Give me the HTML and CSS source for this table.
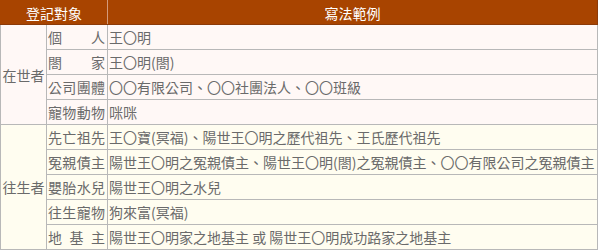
FILE: index.html
```html
<!DOCTYPE html>
<html lang="zh-Hant">
<head>
<meta charset="utf-8">
<title>登記對象</title>
<link rel="stylesheet" href="styles.css">
</head>
<body>
<table class="reg">
  <colgroup>
    <col class="c1">
    <col class="c2">
    <col class="c3">
  </colgroup>
  <thead>
    <tr><th colspan="2">登記對象</th><th>寫法範例</th></tr>
  </thead>
  <tbody class="alive">
    <tr><td rowspan="4" class="grp">在世者</td><td class="kind">個人</td><td>王〇明</td></tr>
    <tr><td class="kind">閤家</td><td>王〇明(閤)</td></tr>
    <tr><td class="kind">公司團體</td><td>〇〇有限公司、〇〇社團法人、〇〇班級</td></tr>
    <tr><td class="kind">寵物動物</td><td>咪咪</td></tr>
  </tbody>
  <tbody class="dead">
    <tr><td rowspan="5" class="grp">往生者</td><td class="kind">先亡祖先</td><td>王〇寶(冥福)、陽世王〇明之歷代祖先、王氏歷代祖先</td></tr>
    <tr><td class="kind">冤親債主</td><td>陽世王〇明之冤親債主、陽世王〇明(閤)之冤親債主、〇〇有限公司之冤親債主</td></tr>
    <tr><td class="kind">嬰胎水兒</td><td>陽世王〇明之水兒</td></tr>
    <tr><td class="kind">往生寵物</td><td>狗來富(冥福)</td></tr>
    <tr><td class="kind">地基主</td><td>陽世王〇明家之地基主 或 陽世王〇明成功路家之地基主</td></tr>
  </tbody>
</table>
</body>
</html>
```

FILE: styles.css
```css
html, body {
  margin: 0;
  padding: 0;
  background: #ffffff;
}

.reg {
  border-collapse: collapse;
  width: 598px;
  table-layout: fixed;
  font-family: "Noto Sans CJK TC", "Noto Sans", sans-serif;
  font-size: 14px;
  color: #6a6a6a;
  line-height: 18px;
  white-space: nowrap;
}

.c1 { width: 46px; }
.c2 { width: 61px; }

.reg th {
  background: #a84400;
  color: #ffffff;
  font-weight: normal;
  height: 23px;
  padding: 0;
  text-align: center;
  border: 1px solid #a84400;
  border-right-color: #d49a7a;
  border-bottom-color: #8c3a08;
}

.reg th:last-child {
  border-right-color: #8c3a08;
}

.reg td {
  height: 24px;
  padding: 0 0 0 1px;
  border: 1px solid #b8b8b8;
  text-align: left;
  vertical-align: middle;
}

.reg td.grp {
  text-align: center;
  padding: 0;
}

.reg td.kind {
  text-align: justify;
  text-align-last: justify;
  padding: 0 2px 0 1px;
}

.alive td { background: #fff8f6; }
.dead td { background: #fffdf0; }
```
